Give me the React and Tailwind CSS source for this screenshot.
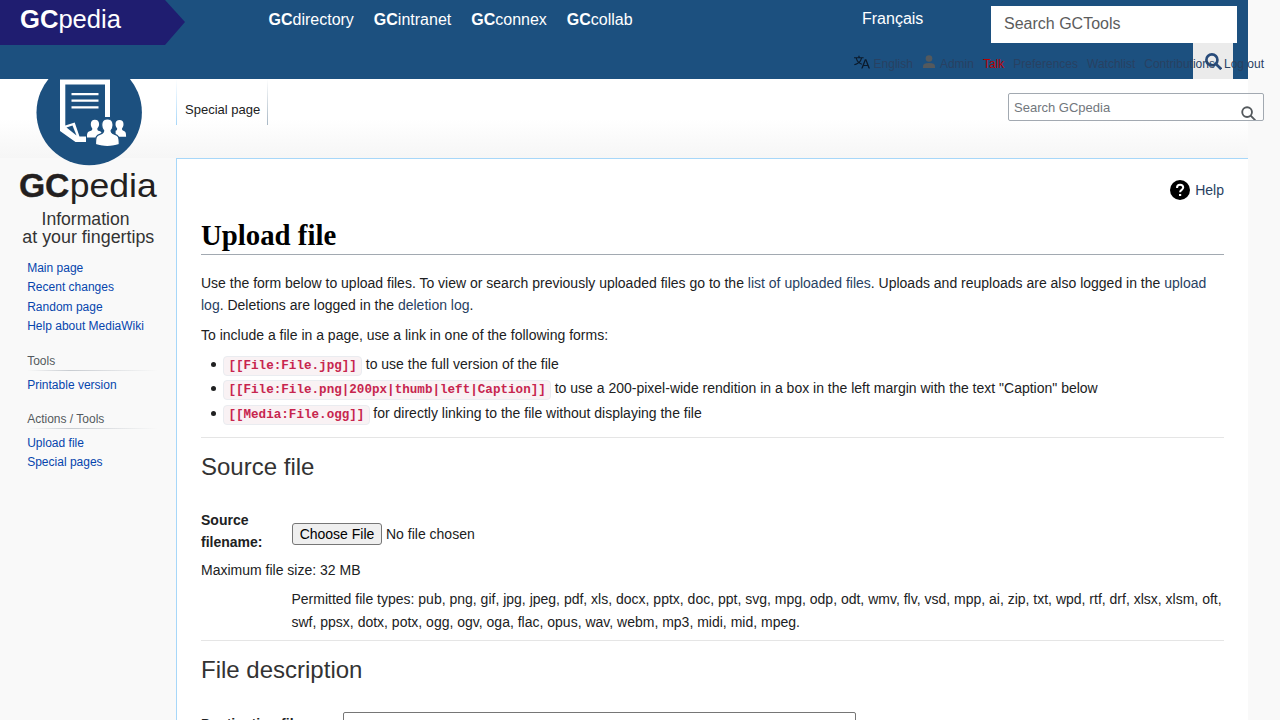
import React from "react";

const contentLink = "text-[#284162]";

function LogoMark() {
  return (
    <svg width="176" height="171" viewBox="0 79 176 171" className="block" fontFamily="'Liberation Sans', Arial, sans-serif" fill="#231f20">
      <circle cx="89.2" cy="112.5" r="52.7" fill="#1c507f" />
      <path d="M60 79.500h50v37.500h-5V84.500H65.300V125.500l9.400-3L79.500 136.500H86v5.500H75.500L60 131z" fill="#fff" />
      <path d="M66.500 127.500l6-2 4 10z" fill="#1c507f" />
      <path d="M71.500 94.200h27M71.500 100.700h27M71.500 107.300h27" stroke="#fff" strokeWidth="2.2" />
      <g fill="#fff">
        <path d="M90.800 124c0-2.800 1.600-4.300 4.100-4.300s4.200 1.500 4.200 4.300c0 2-.8 3.500-1.800 4.400 0 1.500.4 2 2 2.600 2 .8 2.500 1.500 2.500 3.500v2.900H87c0-4.400.4-5.300 3-6.300 2-.8 2.300-1.200 2.300-2.700-.9-1-1.500-2.400-1.500-4.400z" />
        <path d="M115.500 124c0-2.600 1.500-4.100 4-4.100s4 1.500 4 4.100c0 2-.6 3.400-1.500 4.400 0 1.500.3 1.900 1.900 2.600 1.700.8 2.200 1.700 2.200 5.800h-10.500v-6c1.200-.5 1.600-1.100 1.600-2.400-1-1-1.700-2.400-1.700-4.400z" />
        <path stroke="#1c507f" strokeWidth="1.200" d="M101.700 125c0-4 2.200-6 5.700-6s5.700 2 5.700 6c0 2.600-.8 4.400-2 5.600 0 2 .7 2.700 3.300 3.500 4 1.200 4.900 2.500 4.900 10.500-7 2.200-17 2.200-23.800 0 0-8 .8-9.300 4.800-10.500 2.600-.8 3.400-1.500 3.400-3.500-1.200-1.200-2-3-2-5.600z" />
      </g>
      <text x="18.900" y="197" fontSize="34" fontWeight="bold" stroke="#231f20" strokeWidth="0.4" textLength="50.500" lengthAdjust="spacingAndGlyphs">GC</text>
      <text x="69.700" y="197" fontSize="34" textLength="87" lengthAdjust="spacingAndGlyphs">pedia</text>
      <text x="41.500" y="225" fontSize="17.500" fill="#333" textLength="88" lengthAdjust="spacingAndGlyphs">Information</text>
      <text x="22.300" y="243" fontSize="17.500" fill="#333" textLength="132" lengthAdjust="spacingAndGlyphs">at your fingertips</text>
    </svg>
  );
}

function Magnifier({ size, stroke, width }) {
  return (
    <svg width={size} height={size} viewBox="0 0 16 16" fill="none" stroke={stroke} strokeWidth={width}>
      <circle cx="6.500" cy="6.500" r="5.200" />
      <path d="M10.300 10.300l5 5" />
    </svg>
  );
}

function TopBar() {
  const tools = ["directory", "intranet", "connex", "collab"];
  return (
    <header className="relative flex h-[79px] w-[1248px] items-start bg-[#1c507f] text-base text-white">
      <div className="flex h-[45px] w-[185px] items-start bg-[#1f1d70] pt-[1px] pl-5 text-[25.6px] leading-9 [clip-path:polygon(0_0,165px_0,100%_22px,165px_100%,0_100%)]">
        <b>GC</b>pedia
      </div>
      <nav className="ml-[83.500px] flex w-[593.500px] gap-5 pt-2 leading-6">
        {tools.map((t) => (
          <a key={t}><b>GC</b>{t}</a>
        ))}
      </nav>
      <a className="w-[129px] pt-[7px] leading-6">Français</a>
      <div className="w-[246px] pt-[6px]">
        <div className="h-[37px] bg-white pl-[13px] leading-9 text-[#5c5c5c]">Search GCTools</div>
        <div className="ml-[202px] flex h-9 w-10 items-center justify-center bg-[#ebebeb]">
          <Magnifier size={17} stroke="#284b7a" width={2.5} />
        </div>
      </div>
      <PersonalTools />
    </header>
  );
}

function PersonalTools() {
  return (
    <ul className="absolute top-[54px] -right-4 flex gap-[9px] text-xs leading-5 whitespace-nowrap text-[#284162]">
      <li className="flex gap-1">
        <svg width="16" height="16" viewBox="0 0 20 20" fill="#0b1a2b"><path d="M20 18h-1.440a.6.6 0 0 1-.4-.120.800.8 0 0 1-.23-.310L17 15h-5l-1 2.540a.8.8 0 0 1-.220.300.6.6 0 0 1-.400.140H9l4.550-11.470h1.890zm-3.530-4.310L14.890 9.500a12 12 0 0 1-.390-1.240q-.090.370-.190.690l-.190.560-1.580 4.190zm-6.300-1.580a13.400 13.400 0 0 1-2.910-1.410 11.460 11.460 0 0 0 2.810-5.370H12V4H7.310a4 4 0 0 0-.200-.560C6.870 2.790 6.600 2 6.600 2l-1.470.500s.4.890.6 1.500H0v1.330h2.150A11.230 11.230 0 0 0 5 10.700a17.190 17.190 0 0 1-5 2.100q.560.820.870 1.380a23.280 23.280 0 0 0 5.220-2.510 15.640 15.640 0 0 0 3.560 1.770zM3.630 5.330h4.910a8.110 8.110 0 0 1-2.450 4.450 9.110 9.110 0 0 1-2.460-4.450" /></svg>
        English
      </li>
      <li className="flex gap-1">
        <svg className="mt-px" width="14" height="14" viewBox="0 0 14 14" fill="#54595d"><circle cx="7" cy="3.500" r="3.300" /><path d="M1 13v-1.800C1 9 3 8 7 8s6 1 6 3.200V13z" /></svg>
        Admin
      </li>
      <li className="text-[#ba0000]">Talk</li>
      <li>Preferences</li>
      <li>Watchlist</li>
      <li>Contributions</li>
      <li>Log out</li>
    </ul>
  );
}

function NavGroup({ title, links }) {
  return (
    <section className="pl-[27.200px]">
      {title && (
        <>
          <h3 className="mt-[14px] h-[19px] pt-px text-xs leading-[18px] text-[#54595d]">{title}</h3>
          <div className="mb-[5px] h-px w-[131px] bg-linear-to-r from-transparent via-[#c8ccd1] via-33% to-transparent" />
        </>
      )}
      {links.map((l) => (
        <a key={l} className="block h-[19.400px] text-xs leading-[19.400px] text-[#0645ad]">{l}</a>
      ))}
    </section>
  );
}

function Sidebar() {
  return (
    <aside className="w-44 shrink-0">
      <LogoMark />
      <div className="h-[9px]" />
      <NavGroup links={["Main page", "Recent changes", "Random page", "Help about MediaWiki"]} />
      <NavGroup title="Tools" links={["Printable version"]} />
      <NavGroup title="Actions / Tools" links={["Upload file", "Special pages"]} />
    </aside>
  );
}

function PageHead() {
  return (
    <div className="flex h-[79px] w-[1088px] items-start justify-between">
      <div className="flex h-[46px] items-stretch text-[13px]">
        <div className="w-px bg-linear-to-b from-white to-[#a7d7f9]" />
        <span className="w-[90px] pt-[21px] pl-2 leading-5 text-[#202122]">Special page</span>
        <div className="w-px bg-linear-to-b from-white to-[#a7b7c4]" />
      </div>
      <div className="mt-[14px] flex h-7 w-64 items-start justify-between overflow-hidden rounded-[2px] border border-[#a2a9b1] bg-white/50 pr-[7px] pl-[5px] text-[13px] text-[#72777d]">
        <span className="leading-[27px]">Search GCpedia</span>
        <span className="mt-[11.500px]"><Magnifier size={15} stroke="#54595d" width={2} /></span>
      </div>
    </div>
  );
}

const usages = [
  ["[[File:File.jpg]]", "to use the full version of the file"],
  ["[[File:File.png|200px|thumb|left|Caption]]", 'to use a 200-pixel-wide rendition in a box in the left margin with the text "Caption" below'],
  ["[[Media:File.ogg]]", "for directly linking to the file without displaying the file"],
];

function Content() {
  return (
    <main className="h-[562px] overflow-hidden border-t border-l border-[#a7d7f9] bg-white pr-6 pl-6 text-sm leading-[22.400px] text-[#202122]">
      <div className="mt-[21px] flex h-5 items-center justify-end gap-[5px]">
        <svg width="20" height="20" viewBox="0 0 20 20"><circle cx="10" cy="10" r="10" /><path d="M7 8c0-2 1.300-3.200 3.100-3.200S13.200 6 13.200 7.600c0 2.300-3.100 2.300-3.100 4.700" fill="none" stroke="#fff" strokeWidth="2" /><path d="M9 14h2.200v2H9z" fill="#fff" /></svg>
        <a className={contentLink}>Help</a>
      </div>
      <h1 className="mt-[15px] h-10 border-b border-[#a2a9b1] font-['Liberation_Serif',serif] text-[28.800px] leading-[41px] font-bold text-black">Upload file</h1>
      <p className="mt-[17px]">
        Use the form below to upload files. To view or search previously uploaded files go to the <a className={contentLink}>list of uploaded files</a>. Uploads and reuploads are also logged in the <a className={contentLink}>upload log</a>. Deletions are logged in the <a className={contentLink}>deletion log</a>.
      </p>
      <p className="mt-[7px]">To include a file in a page, use a link in one of the following forms:</p>
      <ul className="mt-[7px] grid h-[84px] grid-rows-[24px_25px_24px]">
        {usages.map(([code, text]) => (
          <li key={code} className="flex items-start whitespace-nowrap">
            <span className="mt-[9px] mr-[7px] ml-[10px] size-[5px] rounded-full bg-[#202122]" />
            <code className="mt-[3px] mr-[3.500px] h-5 rounded border border-[#eaecf0] bg-[#f9f2f4] px-[4.400px] font-['Liberation_Mono',monospace] text-[12.600px] leading-[18px] font-bold text-[#c7254e]">{code}</code>
            {text}
          </li>
        ))}
      </ul>
      <hr className="border-[#e5e5e5]" />
      <h2 className="mt-[14px] h-[30px] text-2xl leading-[30px] text-[#333]">Source file</h2>
      <div className="mt-[27px] flex h-[45px] items-center">
        <b className="mb-[2px] w-[91px] leading-[22px]">Source<br />filename:</b>
        <button className="mt-[5px] mr-1 h-[22px] w-[90px] rounded-[3px] border border-[#767676] bg-[#efefef] text-sm leading-[20px] text-black">Choose File</button>
        <span className="mt-[5px]">No file chosen</span>
      </div>
      <p className="mt-[5px] h-[23px]">Maximum file size: 32 MB</p>
      <p className="mt-[6px] ml-[90.500px] h-[46px] leading-[22.800px] whitespace-nowrap">
        Permitted file types: pub, png, gif, jpg, jpeg, pdf, xls, docx, pptx, doc, ppt, svg, mpg, odp, odt, wmv, flv, vsd, mpp, ai, zip, txt, wpd, rtf, drf, xlsx, xlsm, oft,<br />
        swf, ppsx, dotx, potx, ogg, ogv, oga, flac, opus, wav, webm, mp3, midi, mid, mpeg.
      </p>
      <hr className="mt-[6px] border-[#e5e5e5]" />
      <h2 className="mt-[14px] h-[30px] text-2xl leading-[30px] text-[#333]">File description</h2>
      <div className="mt-[27px] flex items-start">
        <b className="w-[142px] shrink-0 pt-px whitespace-nowrap">Destination filename:</b>
        <div className="h-7 w-[513px] rounded-[2px] border border-[#767676] bg-white" />
      </div>
    </main>
  );
}

export default function App() {
  return (
    <div className="h-[720px] w-[1280px] overflow-hidden bg-[#f9f9f9] font-['Liberation_Sans',Arial,sans-serif]">
      <TopBar />
      <div className="flex h-[641px] w-[1248px] bg-[#f9f9f9] bg-linear-to-b from-white from-50% to-[#f6f6f6] bg-[length:100%_79px] bg-no-repeat">
        <Sidebar />
        <div className="w-[1072px] shrink-0">
          <PageHead />
          <Content />
        </div>
      </div>
    </div>
  );
}
